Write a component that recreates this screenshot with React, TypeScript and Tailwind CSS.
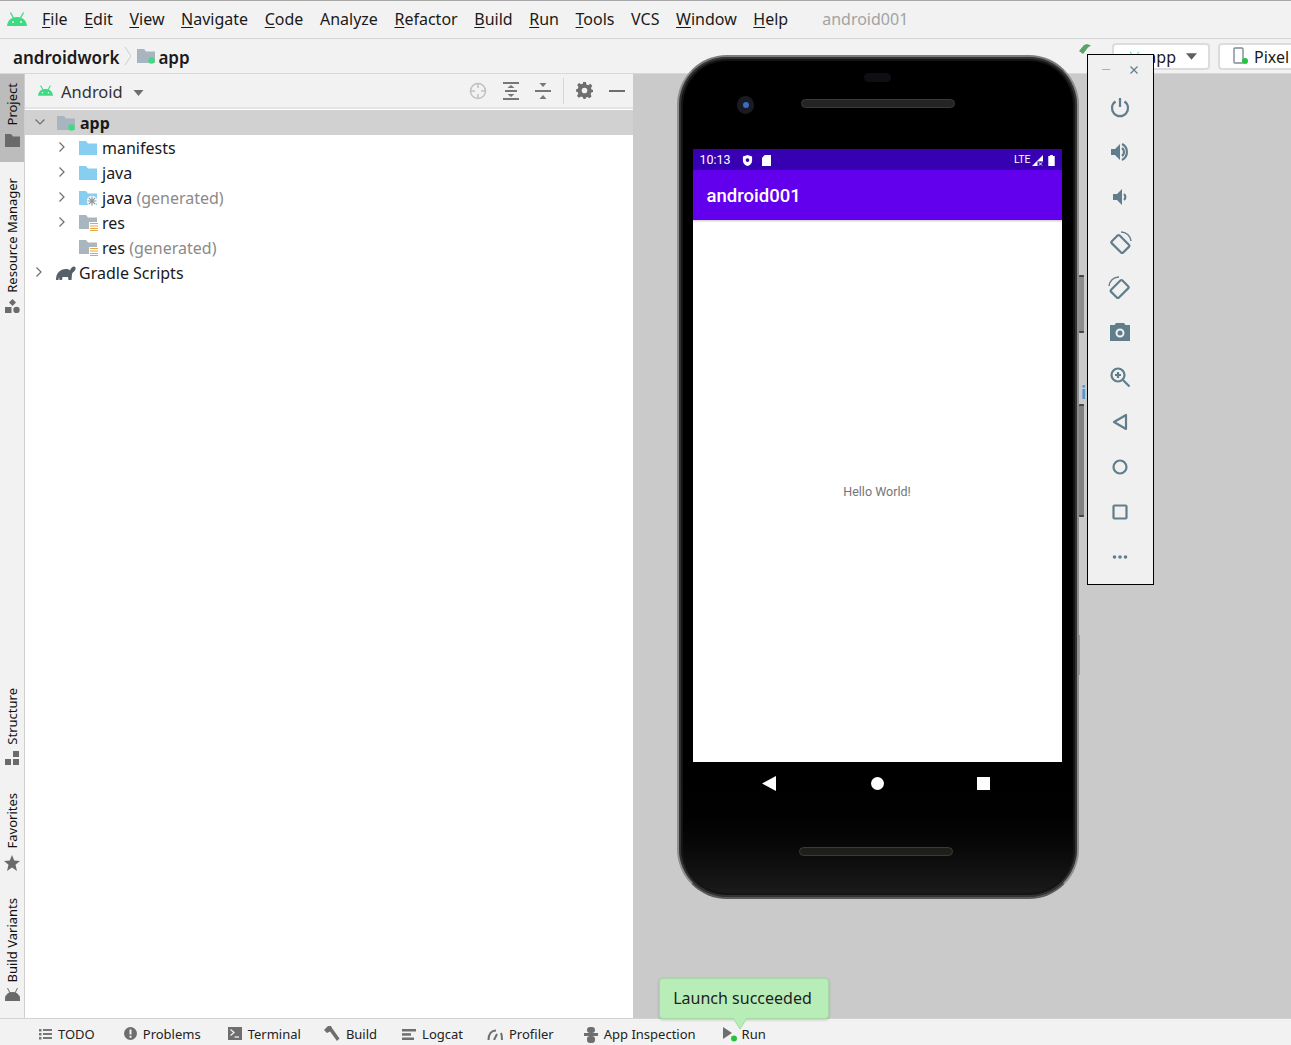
import { ReactNode } from "react";

const menus = ["File", "Edit", "View", "Navigate", "Code", "Analyze", "Refactor", "Build", "Run", "Tools", "VCS", "Window", "Help"];
const noUnderline = ["Analyze", "VCS"];

const AndroidHead = ({ className = "", color = "#3ddc84" }: { className?: string; color?: string }) => (
  <svg viewBox="0 0 20 14" className={className} fill={color}>
    <path d="M0 14 C0.5 8.5 4 5 10 5 C16 5 19.5 8.5 20 14 Z" />
    <path d="M3.5 0.5 L6.5 6 M16.5 0.5 L13.5 6" stroke={color} strokeWidth="1.4" />
    <circle cx="6" cy="10" r="1" fill="#f2f2f2" />
    <circle cx="14" cy="10" r="1" fill="#f2f2f2" />
  </svg>
);

const Folder = ({ color = "#9fb0bb" }: { color?: string }) => (
  <path d="M0 1 H7 L9 3.5 H18 V15 H0 Z" fill={color} />
);

const ModuleFolder = () => (
  <svg viewBox="0 0 19 16" className="w-[19px] h-[16px] shrink-0">
    <Folder color="#a8b5be" />
    <circle cx="14.5" cy="12.5" r="3.2" fill="#3ddc84" />
  </svg>
);

const BlueFolder = () => (
  <svg viewBox="0 0 19 16" className="w-[19px] h-[16px] shrink-0">
    <Folder color="#87cef0" />
  </svg>
);

const GeneratedFolder = () => (
  <svg viewBox="0 0 19 16" className="w-[19px] h-[16px] shrink-0">
    <Folder color="#87cef0" />
    <circle cx="13" cy="11" r="5.2" fill="#ffffff" />
    <path d="M13 6.5 V15.5 M8.5 11 H17.5 M9.8 7.8 L16.2 14.2 M16.2 7.8 L9.8 14.2" stroke="#8b959c" strokeWidth="1.2" />
  </svg>
);

const ResFolder = () => (
  <svg viewBox="0 0 19 17" className="w-[19px] h-[17px] shrink-0">
    <Folder color="#aab6bf" />
    <rect x="10" y="8" width="9" height="9" fill="#ffffff" />
    <path d="M11 9.5 H19 M11 12 H19 M11 14.5 H19 M11 16.5 H19" stroke="#e5a646" strokeWidth="1.2" />
  </svg>
);

const Chevron = ({ down = false }: { down?: boolean }) => (
  <svg viewBox="0 0 10 10" className="w-[10px] h-[10px] shrink-0" fill="none" stroke="#6e6e6e" strokeWidth="1.2">
    {down ? <path d="M0.5 2.5 L5 7 L9.5 2.5" /> : <path d="M2.5 0.5 L7 5 L2.5 9.5" />}
  </svg>
);

const Gradle = () => (
  <svg viewBox="0 0 20 14" className="w-[20px] h-[14px] shrink-0" fill="#55606a">
    <path d="M0 14 C0 7 4 3 10 3 C12 3 13.5 3.5 14 4.5 C15 1.5 17 0 18.5 0.5 C20 1 20 3.5 18.5 5 C17.5 6 16.5 6.5 16 8 L15.5 14 H12.5 L12 11 H6.5 L6 14 H3.5 L3 11 L2.5 14 Z" />
  </svg>
);

const TreeRow = ({ indent, arrow, icon, label, hint, selected }: { indent: string; arrow?: boolean; icon: ReactNode; label: string; hint?: string; selected?: boolean }) => (
  <div className={`h-[25px] flex items-center ${indent} ${selected ? "bg-[#d1d1d1]" : ""}`}>
    <div className="w-[22px] shrink-0 -mt-[2px]">
      {arrow && <Chevron down={selected} />}
    </div>
    <div className="w-[23px] shrink-0 flex">{icon}</div>
    <span className={`pt-px text-[16px] leading-none whitespace-nowrap ${selected ? "font-bold" : ""}`}>
      {label}
      {hint && <span className="text-[#8a8a8a]"> {hint}</span>}
    </span>
  </div>
);

const SideTab = ({ label, icon, spacing, active }: { label: string; icon: ReactNode; spacing: string; active?: boolean }) => (
  <div className={`flex flex-col items-center w-full ${spacing} ${active ? "bg-[#bcbcbc]" : ""}`}>
    <span className="[writing-mode:vertical-rl] rotate-180 text-[13px] leading-[15px] whitespace-nowrap text-[#111]">{label}</span>
    <div className={`${active ? "mt-[9px]" : "mt-[6px]"} flex justify-center`}>{icon}</div>
  </div>
);

const BottomTool = ({ icon, label, gap }: { icon: ReactNode; label: string; gap: string }) => (
  <div className={`flex items-center gap-[6px] ${gap}`}>
    {icon}
    <span className="text-[13px] leading-none whitespace-nowrap text-[#222]">{label}</span>
  </div>
);

const Emu = ({ children }: { children: ReactNode }) => (
  <div className="h-[45px] flex items-center justify-center pr-px">
    <svg viewBox="0 0 24 24" className="w-[24px] h-[24px]" fill="none" stroke="#607d8b" strokeWidth="2.2">
      {children}
    </svg>
  </div>
);

const App = () => {
  return (
    <div className="relative w-[1291px] h-[1045px] overflow-hidden bg-[#f2f2f2] flex flex-col font-['Noto_Sans','Open_Sans',sans-serif] text-[#1a1a1a]">
      {/* menu bar */}
      <div className="h-[39px] shrink-0 border-t border-t-[#a8a8a8] border-b border-b-[#d4d4d4] flex items-center pl-[7px] pb-[1px]">
        <AndroidHead className="w-[20px] h-[14px] mr-[15px]" />
        <div className="flex items-center gap-[16.6px] text-[16px] leading-none">
          {menus.map((m) => (
            <span key={m} className="whitespace-nowrap">
              {noUnderline.includes(m) ? m : <><span className="underline underline-offset-2">{m[0]}</span>{m.slice(1)}</>}
            </span>
          ))}
        </div>
        <span className="ml-[34px] text-[16px] leading-none text-[#a3a3a3]">android001</span>
      </div>

      {/* breadcrumb bar */}
      <div className="h-[35px] shrink-0 flex items-center pl-[13px] border-b border-b-[#d8d8d8]">
        <span className="pt-[2px] text-[17px] font-semibold leading-none">androidwork</span>
        <svg viewBox="0 0 8 20" className="w-[8px] h-[20px] mx-[5px]" fill="none" stroke="#cfcfcf"><path d="M1 1 L7 10 L1 19" /></svg>
        <ModuleFolder />
        <span className="pt-[2px] ml-[2px] text-[17px] font-semibold leading-none">app</span>
        <div className="ml-auto flex items-center">
          <svg viewBox="0 0 12 10" className="w-[12px] h-[10px] mr-[21px] -mt-[14px]" fill="#5aa469"><path d="M0 7 L5 1 L8 0 L12 1.500 L9 3.500 L4 10 Z" /></svg>
          <div className="w-[98px] h-[27px] bg-white border-2 border-[#dcdcdc] rounded-[4px] flex items-center pl-[14px] pr-[11px]">
            <AndroidHead className="w-[13px] h-[10px]" />
            <span className="ml-auto mr-[10px] pt-[2px] text-[16px] leading-none">app</span>
            <svg viewBox="0 0 10 6" className="w-[11px] h-[7px]" fill="#5f5f5f"><path d="M0 0 H10 L5 6 Z" /></svg>
          </div>
          <div className="w-[73px] h-[27px] ml-[8px] bg-white border-2 border-r-0 border-[#dcdcdc] rounded-l-[4px] flex items-center pl-[13px] gap-[5px]">
            <svg viewBox="0 0 16 18" className="w-[16px] h-[18px] shrink-0">
              <rect x="1" y="1" width="9" height="15" rx="1" fill="none" stroke="#7d8b94" strokeWidth="1.4" />
              <circle cx="12" cy="14" r="3" fill="#22c53c" />
            </svg>
            <span className="pt-[2px] text-[16px] leading-none">Pixel</span>
          </div>
        </div>
      </div>

      {/* main area */}
      <div className="flex-1 min-h-0 flex">
        <div className="w-[25px] shrink-0 border-r border-r-[#cfcfcf] flex flex-col">
          <SideTab
            label="Project"
            spacing="h-[88px] pt-[9px]"
            active
            icon={<svg viewBox="0 0 15 13" className="w-[15px] h-[13px]" fill="#6a6a6a"><path d="M0 0 H6 L8 2.5 H15 V13 H0 Z" /></svg>}
          />
          <SideTab
            label="Resource Manager"
            spacing="mt-[16px]"
            icon={<svg viewBox="0 0 15 14" className="w-[15px] h-[14px]" fill="#6a6a6a"><path d="M7.5 0 L11 3.5 L7.5 7 L4 3.5 Z" /><rect x="0" y="8" width="6.5" height="6" /><circle cx="11.5" cy="11" r="3.2" /></svg>}
          />
          <SideTab
            label="Structure"
            spacing="mt-auto"
            icon={<svg viewBox="0 0 14 14" className="w-[14px] h-[14px]" fill="#6a6a6a"><rect x="8" y="0" width="6" height="6" /><rect x="0" y="8" width="6" height="6" /><rect x="8" y="8" width="6" height="6" /></svg>}
          />
          <SideTab
            label="Favorites"
            spacing="mt-[28px]"
            icon={<svg viewBox="0 0 16 16" className="w-[16px] h-[16px]" fill="#6a6a6a"><path d="M8 0 L10.2 5.6 L16 6 L11.5 9.8 L13 16 L8 12.6 L3 16 L4.5 9.8 L0 6 L5.8 5.6 Z" /></svg>}
          />
          <SideTab
            label="Build Variants"
            spacing="mt-[27px] pb-[17px]"
            icon={<svg viewBox="0 0 15 13" className="w-[15px] h-[13px]" fill="#6a6a6a"><path d="M0 13 C0 7 3 4.5 7.5 4.5 C12 4.5 15 7 15 13 Z M2.5 0 L5 5 M12.5 0 L10 5" stroke="#6a6a6a" /></svg>}
          />
        </div>

        {/* project panel */}
        <div className="w-[608px] shrink-0 flex flex-col bg-white">
          <div className="h-[35px] shrink-0 bg-[#f2f2f2] border-b-2 border-b-[#e4e4e4] flex items-center pl-[13px] pr-[8px]">
            <AndroidHead className="w-[15px] h-[11px]" />
            <span className="pt-[3px] ml-[8px] text-[16.5px] leading-none text-[#333]">Android</span>
            <svg viewBox="0 0 10 6" className="ml-[10px] mt-[5px] w-[11px] h-[6px]" fill="#6e6e6e"><path d="M0 0 H10 L5 6 Z" /></svg>
            <div className="ml-auto flex items-center">
              <svg viewBox="0 0 18 18" className="w-[18px] h-[18px]" fill="none" stroke="#c2c2c2" strokeWidth="1.6">
                <circle cx="9" cy="9" r="7.5" />
                <path d="M9 1.5 V6 M9 12 V16.5 M1.5 9 H6 M12 9 H16.5" />
              </svg>
              <svg viewBox="0 0 16 18" className="ml-[16px] w-[16px] h-[18px]" fill="#777">
                <rect x="0" y="0" width="16" height="2" /><rect x="0" y="16" width="16" height="2" /><rect x="2" y="8" width="12" height="2" />
                <path d="M4.5 6 L8 3 L11.5 6 Z M4.5 12 L8 15 L11.5 12 Z" />
              </svg>
              <svg viewBox="0 0 16 18" className="ml-[16px] w-[16px] h-[18px]" fill="#777">
                <rect x="0" y="8" width="16" height="2" />
                <path d="M4.5 1 L8 5 L11.5 1 Z M4.5 17 L8 13 L11.5 17 Z" />
              </svg>
              <div className="ml-[12px] w-px h-[26px] bg-[#d6d6d6]" />
              <svg viewBox="0 0 24 24" className="ml-[12px] w-[17px] h-[17px]" fill="#6e6e6e">
                <path fillRule="evenodd" d="M10 0 H14 L14.7 3.4 L17.3 4.5 L20.2 2.6 L23 5.4 L21.1 8.3 L22.2 10.9 L24 11 V14 L21.8 14.6 L20.7 17.2 L22 20.2 L19.2 23 L16.3 21.1 L14 22 L13.5 24 H10.5 L9.7 21.6 L7.1 20.5 L4.2 22.4 L1.4 19.6 L3.3 16.7 L2.2 14.1 L0 13.5 V10.5 L2.4 9.7 L3.5 7.1 L1.6 4.2 L4.4 1.4 L7.3 3.3 L9.7 2.3 Z M12 8 A4 4 0 1 0 12 16 A4 4 0 1 0 12 8 Z" />
              </svg>
              <div className="ml-[16px] w-[16px] h-[2px] bg-[#6e6e6e]" />
            </div>
          </div>
          <div className="flex-1 pt-px">
            <TreeRow indent="pl-[10px]" arrow selected icon={<ModuleFolder />} label="app" />
            <TreeRow indent="pl-[32px]" arrow icon={<BlueFolder />} label="manifests" />
            <TreeRow indent="pl-[32px]" arrow icon={<BlueFolder />} label="java" />
            <TreeRow indent="pl-[32px]" arrow icon={<GeneratedFolder />} label="java" hint="(generated)" />
            <TreeRow indent="pl-[32px]" arrow icon={<ResFolder />} label="res" />
            <TreeRow indent="pl-[32px]" icon={<ResFolder />} label="res" hint="(generated)" />
            <TreeRow indent="pl-[9px]" arrow icon={<Gradle />} label="Gradle Scripts" />
          </div>
        </div>

        <div className="flex-1 bg-[#cacaca]" />
      </div>

      {/* bottom tool bar */}
      <div className="h-[27px] shrink-0 border-t border-t-[#d2d2d2] flex items-center pl-[39px] pt-[5px]">
        <BottomTool
          gap=""
          label="TODO"
          icon={<svg viewBox="0 0 13 11" className="w-[13px] h-[11px]" fill="#777"><path d="M0 0 H2.5 V2.5 H0 Z M4 0 H13 V2 H4 Z M0 4 H2.5 V6.5 H0 Z M4 4 H13 V6 H4 Z M0 8 H2.5 V10.5 H0 Z M4 8 H13 V10 H4 Z" /></svg>}
        />
        <BottomTool
          gap="ml-[29px]"
          label="Problems"
          icon={<svg viewBox="0 0 13 13" className="w-[13px] h-[13px] -mt-[3px]"><circle cx="6.5" cy="6.5" r="6.5" fill="#6e6e6e" /><path d="M5.5 2.5 H7.5 V7.5 H5.5 Z M5.5 8.8 H7.5 V10.8 H5.5 Z" fill="#f2f2f2" /></svg>}
        />
        <BottomTool
          gap="ml-[27px]"
          label="Terminal"
          icon={<svg viewBox="0 0 14 13" className="w-[14px] h-[13px] -mt-[3px]"><rect width="14" height="13" fill="#6e6e6e" /><path d="M2.5 2.5 L6 5.5 L2.5 8.5" stroke="#f2f2f2" strokeWidth="1.3" fill="none" /><path d="M6.5 10 H11" stroke="#f2f2f2" strokeWidth="1.3" /></svg>}
        />
        <BottomTool
          gap="ml-[23px]"
          label="Build"
          icon={<svg viewBox="0 0 16 15" className="w-[16px] h-[15px] -mt-[3px]" fill="#6e6e6e"><path d="M0 4 L4 0 H7 L8 2 L15.5 12.5 L13 15 L6 5.5 L3 7 Z" /></svg>}
        />
        <BottomTool
          gap="ml-[25px]"
          label="Logcat"
          icon={<svg viewBox="0 0 14 11" className="w-[14px] h-[11px]" fill="#6e6e6e"><rect width="14" height="2.5" /><rect y="4.2" width="9" height="2.5" /><rect y="8.5" width="12" height="2.5" /></svg>}
        />
        <BottomTool
          gap="ml-[24px]"
          label="Profiler"
          icon={<svg viewBox="0 0 16 11" className="w-[16px] h-[11px]" fill="none" stroke="#6e6e6e" strokeWidth="2"><path d="M1.5 11 C1.5 5 4.5 1.5 9 1.5 M14 4 C15 6 15 8.5 15 11 M7 11 L10 5" /></svg>}
        />
        <BottomTool
          gap="ml-[30px]"
          label="App Inspection"
          icon={<svg viewBox="0 0 14 16" className="w-[14px] h-[16px]" fill="#6e6e6e"><rect x="3" y="0" width="8" height="6" rx="3" /><rect x="0" y="6" width="14" height="3" /><rect x="3" y="9" width="8" height="7" rx="3" /></svg>}
        />
        <BottomTool
          gap="ml-[27px]"
          label="Run"
          icon={<svg viewBox="0 0 15 15" className="w-[15px] h-[15px] -mr-[2px]"><path d="M0 0 L9 6 L0 12 Z" fill="#6e6e6e" /><circle cx="11" cy="11.5" r="3" fill="#22c53c" /></svg>}
        />
      </div>

      {/* launch toast */}
      <div className="absolute left-[659px] top-[978px] w-[170px] h-[41px] bg-[#b9edb7] border border-[#a5dba3] rounded-[4px] shadow-[0_1px_3px_rgba(0,0,0,0.2)] flex items-center justify-center pr-[3px] pb-[1px] text-[16px] leading-none text-[#222]">
        Launch succeeded
        <svg viewBox="0 0 14 11" className="absolute left-[73px] top-[39px] w-[14px] h-[11px]">
          <path d="M0 0 L7 11 L14 0 Z" fill="#b9edb7" />
          <path d="M0 0 L7 11 L14 0" fill="none" stroke="#a5dba3" />
        </svg>
      </div>

      {/* stuff showing behind the emulator window */}
      <div className="absolute left-[1079px] top-[275px] w-[5px] h-[58px] rounded-[1px] bg-[#8d8d8d] border-y-2 border-y-[#444]" />
      <div className="absolute left-[1079px] top-[404px] w-[5px] h-[113px] rounded-[1px] bg-[#808080] border-y-2 border-y-[#444]" />
      <div className="absolute left-[1079px] top-[635px] w-[1px] h-[40px] bg-[#9a9a9a]" />
      <span className="absolute left-[1081px] top-[384px] text-[17px] leading-none font-bold text-[#4a9ad4]">i</span>

      {/* emulator window */}
      <div className="absolute left-[677px] top-[55px] w-[402px] h-[844px] rounded-[50px] bg-gradient-to-b from-black from-85% to-[#1c1c1c] border-[2px] border-x-[#8e8e8e] border-t-[#7d7d7d] border-b-[#5a5a5a] shadow-[inset_0_0_0_2px_#333,inset_0_0_0_4px_#141414] flex flex-col items-center">
        <div className="relative h-[92px] w-full shrink-0">
          <div className="absolute left-[185px] top-[16px] w-[27px] h-[9px] rounded-full bg-[#0e0f12]" />
          <div className="absolute left-[58px] top-[39px] w-[17px] h-[18px] rounded-full bg-[#181b22] flex items-center justify-center">
            <div className="w-[6px] h-[6px] rounded-full bg-[#3f68c8]" />
          </div>
          <div className="absolute left-[122px] top-[42px] w-[154px] h-[9px] rounded-full bg-[#242424] border border-[#3a3a3a]" />
        </div>
        <div className="w-[369px] h-[613px] shrink-0 -ml-[2px] flex flex-col bg-white font-['Roboto',sans-serif]">
          <div className="h-[21px] shrink-0 bg-[#3700b3] flex items-center px-[7px] pt-[1px] text-white">
            <span className="text-[12.5px] leading-none">10:13</span>
            <svg viewBox="0 0 12 12" className="ml-[11px] w-[11px] h-[11px]" fill="white"><path d="M6 0 L11 1.5 V6 C11 9 9 11 6 12 C3 11 1 9 1 6 V1.5 Z" /><circle cx="6" cy="5.5" r="2" fill="#3700b3" /></svg>
            <svg viewBox="0 0 10 12" className="ml-[9px] w-[9px] h-[11px]" fill="white"><path d="M3 0 H10 V12 H0 V3 Z" /></svg>
            <span className="ml-auto text-[10.5px] leading-none -mr-[1px]">LTE</span>
            <svg viewBox="0 0 12 12" className="ml-[2px] w-[11px] h-[11px]" fill="white">
              <path d="M12 0 V12 H0 Z" />
              <rect x="6" y="7" width="6" height="5" fill="#3700b3" />
              <path d="M7.5 8 L11 11.5 M11 8 L7.5 11.5" stroke="white" />
            </svg>
            <svg viewBox="0 0 7 12" className="ml-[5px] w-[7px] h-[11px]" fill="white"><path d="M2 0 H5 V1 H7 V12 H0 V1 H2 Z" /></svg>
          </div>
          <div className="h-[50px] shrink-0 bg-[#6200ee] flex items-center pl-[14px] pt-[2px] shadow-[0_1px_2px_rgba(0,0,0,0.25)]">
            <span className="text-white text-[18.5px] font-medium leading-none">android001</span>
          </div>
          <div className="flex-1 flex items-center justify-center pt-[3px]">
            <span className="text-[12.5px] leading-none text-[#757575]">Hello World!</span>
          </div>
        </div>
        <div className="relative h-[135px] w-full shrink-0">
          <svg viewBox="0 0 14 15" className="absolute left-[83px] top-[14px] w-[14px] h-[15px]" fill="white"><path d="M14 0 V15 L0 7.5 Z" /></svg>
          <div className="absolute left-[192px] top-[15px] w-[13px] h-[13px] rounded-full bg-white" />
          <div className="absolute left-[298px] top-[15px] w-[13px] h-[13px] bg-white" />
          <div className="absolute left-[120px] top-[85px] w-[154px] h-[9px] rounded-full bg-[#1e1e1a] border border-[#3a3a3a]" />
        </div>
      </div>

      {/* emulator side toolbar */}
      <div className="absolute left-[1087px] top-[54px] w-[67px] h-[531px] bg-[#f0f0f0] border border-black flex flex-col">
        <div className="h-[29px] shrink-0 flex items-center justify-center gap-[20px] pr-px">
          <div className="w-[8px] h-px bg-[#9fb0b8]" />
          <svg viewBox="0 0 8 8" className="w-[8px] h-[8px]" fill="none" stroke="#607d8b" strokeWidth="1.2"><path d="M0.5 0.5 L7.5 7.5 M7.5 0.5 L0.5 7.5" /></svg>
        </div>
        <Emu>
          <path d="M12 3 V12" />
          <path d="M7.5 6.5 A8 8 0 1 0 16.5 6.5" />
        </Emu>
        <Emu>
          <path d="M3 9 H7 L12 4 V20 L7 15 H3 Z" fill="#607d8b" stroke="none" />
          <path d="M14 8 A5 5 0 0 1 14 16" />
          <path d="M14 4 A9 9 0 0 1 14 20" />
        </Emu>
        <Emu>
          <path d="M5 9 H9 L14 4 V20 L9 15 H5 Z" fill="#607d8b" stroke="none" />
          <path d="M16 9 A4 4 0 0 1 16 15" />
        </Emu>
        <Emu>
          <rect x="6" y="6" width="11" height="16" rx="1.5" transform="rotate(-45 12 13)" />
          <path d="M13 2 A10 10 0 0 1 23 11" strokeWidth="1.5" />
        </Emu>
        <Emu>
          <rect x="7" y="6" width="11" height="16" rx="1.5" transform="rotate(45 12 13)" />
          <path d="M1 11 A10 10 0 0 1 11 2" strokeWidth="1.5" />
        </Emu>
        <Emu>
          <path fillRule="evenodd" d="M8 3 H16 L17.5 5 H22 V21 H2 V5 H6.5 Z M12 8.5 A4.5 4.5 0 1 0 12 17.5 A4.5 4.5 0 1 0 12 8.5 Z" fill="#607d8b" stroke="none" />
          <circle cx="12" cy="13" r="2.5" fill="#607d8b" stroke="none" />
        </Emu>
        <Emu>
          <circle cx="10" cy="10" r="6.5" />
          <path d="M15 15 L21.5 21.5 M10 7 V13 M7 10 H13" />
        </Emu>
        <Emu>
          <path d="M6 12 L18 5 V19 Z" strokeLinejoin="round" />
        </Emu>
        <Emu>
          <circle cx="12" cy="12" r="6.5" />
        </Emu>
        <Emu>
          <rect x="5.5" y="5.5" width="13" height="13" rx="1" />
        </Emu>
        <Emu>
          <circle cx="6.5" cy="12" r="1.8" fill="#607d8b" stroke="none" />
          <circle cx="12" cy="12" r="1.8" fill="#607d8b" stroke="none" />
          <circle cx="17.5" cy="12" r="1.8" fill="#607d8b" stroke="none" />
        </Emu>
      </div>
    </div>
  );
};

export default App;
